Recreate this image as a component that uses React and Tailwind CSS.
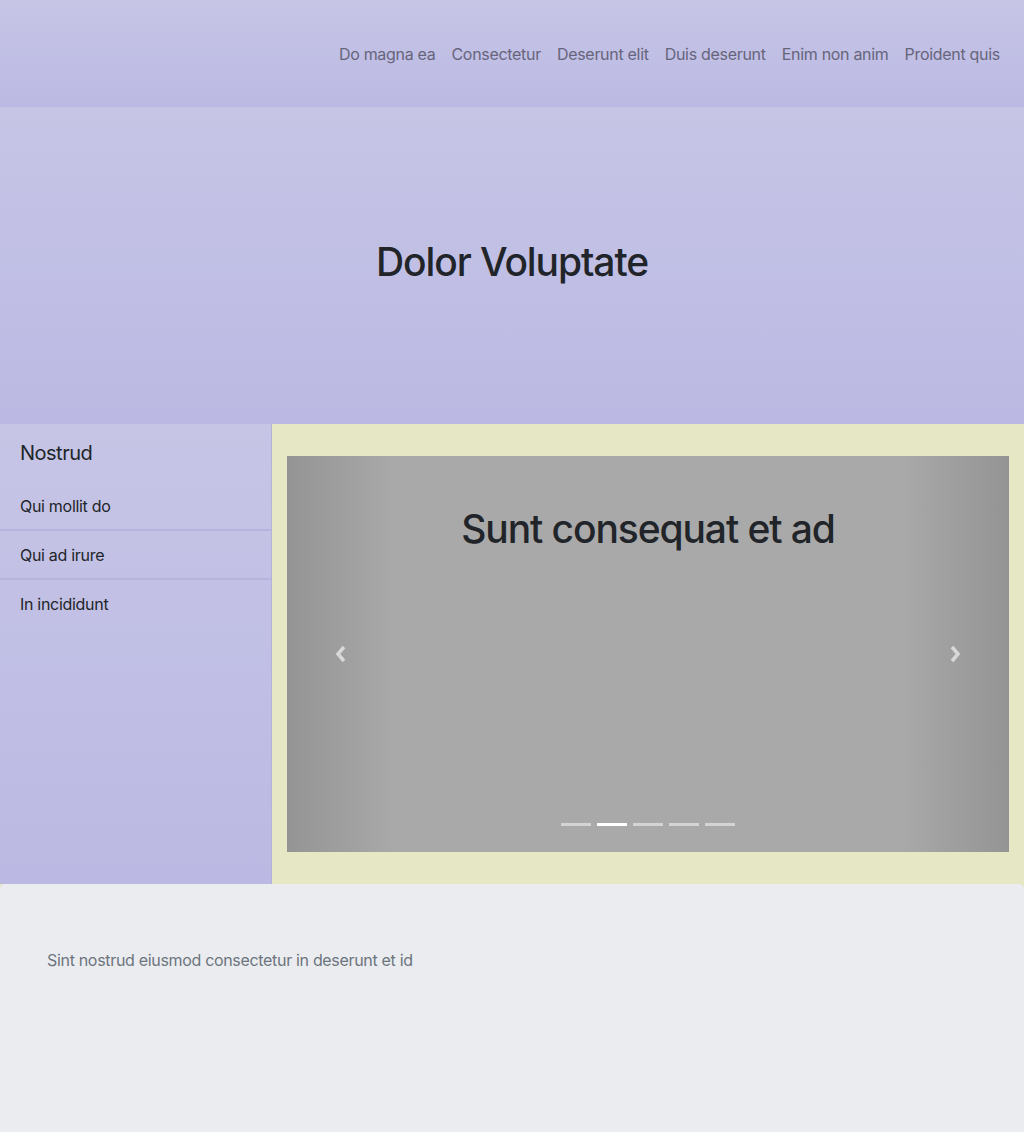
import React, { useState } from 'react'

const navLinks = ['Do magna ea', 'Consectetur', 'Deserunt elit', 'Duis deserunt', 'Enim non anim', 'Proident quis']
const sideLinks = ['Qui mollit do', 'Qui ad irure', 'In incididunt']

const Chevron = ({ dir }) => (
  <svg width="14" height="20" viewBox="0 0 14 20" className="opacity-60">
    {dir === 'left' ? (
      <path d="M10 3 L4 10 L10 17" fill="none" stroke="#ffffff" strokeWidth="3.5" />
    ) : (
      <path d="M4 3 L10 10 L4 17" fill="none" stroke="#ffffff" strokeWidth="3.5" />
    )}
  </svg>
)

const App = () => {
  const [active, setActive] = useState(1)

  return (
    <div className="min-h-screen bg-[#e6e7c4] text-[#212529]" style={{ fontFamily: 'Inter, "Noto Sans", sans-serif' }}>
      {/* Header */}
      <header className="h-[107px] bg-gradient-to-b from-[#c6c5e6] to-[#bbb9e3] flex items-center justify-end pr-4">
        <nav className="flex">
          {navLinks.map((l) => (
            <a key={l} href="#" className="px-2 text-[16px] text-[#67657c] leading-6 tracking-[-0.3px]">
              {l}
            </a>
          ))}
        </nav>
      </header>

      {/* Hero */}
      <section className="h-[317px] bg-gradient-to-b from-[#c6c5e6] to-[#bbb9e3] flex items-center justify-center pb-[6px]">
        <h1 className="text-[39px] font-medium leading-tight tracking-[-1.1px]">Dolor Voluptate</h1>
      </section>

      {/* Middle */}
      <div className="flex h-[460px]">
        <aside className="w-[272px] shrink-0 bg-gradient-to-b from-[#c6c5e6] to-[#bbb9e3] border-r border-[#b4b2d9]">
          <h2 className="px-5 pt-[17px] pb-[17px] text-[20px] leading-[24px] tracking-[-0.5px]">Nostrud</h2>
          <ul>
            {sideLinks.map((l, i) => (
              <li
                key={l}
                className={`px-5 h-[49px] flex items-center text-[16px] tracking-[-0.3px] ${i < sideLinks.length - 1 ? 'border-b-2 border-[#b6b4dc]' : 'pb-[2px]'}`}
              >
                {l}
              </li>
            ))}
          </ul>
        </aside>

        <main className="flex-1 p-[15px] pt-[32px] pb-[32px]">
          <div className="relative h-full bg-[#a9a9a9] overflow-hidden">
            <div className="absolute inset-y-0 left-0 w-[108px] bg-gradient-to-r from-[#949494] to-[#a9a9a9] flex items-center justify-center">
              <Chevron dir="left" />
            </div>
            <div className="absolute inset-y-0 right-0 w-[108px] bg-gradient-to-l from-[#949494] to-[#a9a9a9] flex items-center justify-center">
              <Chevron dir="right" />
            </div>
            <h2 className="relative pt-[49px] text-center text-[39px] font-medium leading-tight tracking-[-1.1px]">
              Sunt consequat et ad
            </h2>
            <div className="absolute left-0 right-0 bottom-[26px] flex justify-center gap-[6px]">
              {[0, 1, 2, 3, 4].map((i) => (
                <button
                  key={i}
                  onClick={() => setActive(i)}
                  className={`w-[30px] h-[3px] ${i === active ? 'bg-white' : 'bg-white/50'}`}
                />
              ))}
            </div>
          </div>
        </main>
      </div>

      {/* Footer */}
      <footer className="h-[248px] bg-[#ebecf0] rounded-t-[5px] px-[47px] pt-[64px]">
        <p className="text-[16px] leading-6 text-[#6c757d] tracking-[-0.32px]">Sint nostrud eiusmod consectetur in deserunt et id</p>
      </footer>
    </div>
  )
}

export default App
